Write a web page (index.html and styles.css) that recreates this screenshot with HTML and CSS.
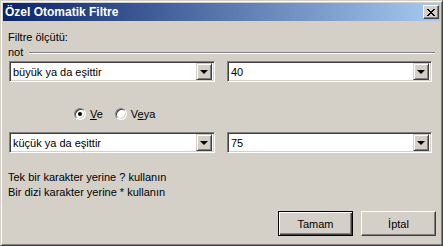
FILE: index.html
```html
<!DOCTYPE html>
<html lang="tr">
<head>
  <meta charset="UTF-8">
  <title>Özel Otomatik Filtre</title>
  <link rel="stylesheet" href="styles.css">
</head>
<body>

  <div class="window">
    <div class="titlebar">
      <span class="title">Özel Otomatik Filtre</span>
      <button class="close" type="button">
        <svg width="8" height="7" viewBox="0 0 8 7">
          <path d="M0 0h2v1h-2zM6 0h2v1h-2zM1 1h2v1h-2zM5 1h2v1h-2zM2 2h4v1h-4zM3 3h2v1h-2zM2 4h4v1h-4zM1 5h2v1h-2zM5 5h2v1h-2zM0 6h2v1h-2zM6 6h2v1h-2z" fill="#000"/>
        </svg>
      </button>
    </div>

    <div class="content">
      <div class="line">Filtre ölçütü:</div>
      <div class="group">
        <span>not</span>
        <span class="etched"></span>
      </div>

      <div class="row">
        <div class="combo wide">
          <span class="value">büyük ya da eşittir</span>
          <span class="drop"><i></i></span>
        </div>
        <div class="combo">
          <span class="value">40</span>
          <span class="drop"><i></i></span>
        </div>
      </div>

      <div class="radios">
        <label class="option"><span class="radio checked"></span><span><u>V</u>e</span></label>
        <label class="option"><span class="radio"></span><span>V<u>e</u>ya</span></label>
      </div>

      <div class="row second">
        <div class="combo wide">
          <span class="value">küçük ya da eşittir</span>
          <span class="drop"><i></i></span>
        </div>
        <div class="combo">
          <span class="value">75</span>
          <span class="drop"><i></i></span>
        </div>
      </div>

      <div class="hints">
        <div class="line">Tek bir karakter yerine ? kullanın</div>
        <div class="line">Bir dizi karakter yerine * kullanın</div>
      </div>

      <div class="buttons">
        <button class="btn default" type="button">Tamam</button>
        <button class="btn" type="button">İptal</button>
      </div>
    </div>
  </div>

</body>
</html>
```

FILE: styles.css
```css
body {
  margin: 0;
  font-family: "Liberation Sans", Arial, sans-serif;
  font-size: 11px;
  color: #000;
  background: #d4d0c8;
}
.window {
  width: 443px;
  height: 246px;
  box-sizing: border-box;
  background: #d4d0c8;
  border: 1px solid;
  border-color: #d4d0c8 #404040 #404040 #d4d0c8;
  box-shadow: inset 1px 1px 0 #fff, inset -1px -1px 0 #808080;
  padding: 2px;
}
.titlebar {
  height: 18px;
  display: flex;
  align-items: center;
  justify-content: space-between;
  padding: 0 1px 0 2px;
  background: linear-gradient(to right, #0a246a, #a6caf0);
}
.title {
  color: #fff;
  font-weight: bold;
  font-size: 12px;
}
.close {
  width: 16px;
  height: 14px;
  padding: 0;
  display: flex;
  align-items: center;
  justify-content: center;
  background: #d4d0c8;
  border: 1px solid;
  border-color: #fff #404040 #404040 #fff;
  box-shadow: inset -1px -1px 0 #808080;
}
.content {
  padding: 9px 8px 0 5px;
}
.line {
  height: 15px;
  line-height: 15px;
}
.group {
  display: flex;
  align-items: center;
  height: 15px;
  line-height: 15px;
  margin-right: -3px;
}
.etched {
  flex: 1;
  height: 0;
  margin-left: 6px;
  margin-top: 1px;
  border-top: 1px solid #808080;
  border-bottom: 1px solid #fff;
}
.row {
  display: flex;
  gap: 12px;
  margin: 1px 0 0 1px;
}
.row.second {
  margin-top: 11px;
}
.combo {
  flex: 1;
  height: 21px;
  box-sizing: border-box;
  display: flex;
  align-items: center;
  background: #fff;
  border: 1px solid;
  border-color: #808080 #fff #fff #808080;
  box-shadow: inset 1px 1px 0 #404040, inset -1px -1px 0 #d4d0c8;
  padding: 1px 2px 1px 2px;
}
.combo.wide {
  flex: 0 0 206px;
}
.value {
  flex: 1;
  padding-left: 1px;
}
.drop {
  width: 16px;
  height: 17px;
  box-sizing: border-box;
  display: flex;
  align-items: center;
  justify-content: center;
  background: #d4d0c8;
  border: 1px solid;
  border-color: #d4d0c8 #404040 #404040 #d4d0c8;
  box-shadow: inset 1px 1px 0 #fff, inset -1px -1px 0 #808080;
}
.drop i {
  width: 0;
  height: 0;
  border-left: 4px solid transparent;
  border-right: 4px solid transparent;
  border-top: 4px solid #000;
}
.radios {
  display: flex;
  gap: 12px;
  margin: 24px 0 0 66px;
  height: 15px;
}
.option {
  display: flex;
  align-items: center;
  gap: 4px;
}
.radio {
  width: 12px;
  height: 12px;
  box-sizing: border-box;
  border-radius: 50%;
  background: #fff;
  border: 1px solid;
  border-color: #808080 #fff #fff #808080;
  box-shadow: inset 1px 1px 0 #404040, inset -1px -1px 0 #d4d0c8;
  display: flex;
  align-items: center;
  justify-content: center;
}
.radio.checked::after {
  content: "";
  width: 4px;
  height: 4px;
  border-radius: 50%;
  background: #000;
}
.hints {
  margin-top: 17px;
}
.buttons {
  display: flex;
  justify-content: flex-end;
  gap: 8px;
  margin: 11px -4px 0 0;
}
.btn {
  width: 75px;
  height: 25px;
  padding: 0;
  font-family: "Liberation Sans", Arial, sans-serif;
  font-size: 11px;
  color: #000;
  background: #d4d0c8;
  border: 1px solid;
  border-color: #fff #404040 #404040 #fff;
  box-shadow: inset -1px -1px 0 #808080;
}
.btn.default {
  border-color: #000;
  box-shadow: inset 1px 1px 0 #fff, inset -1px -1px 0 #404040, inset -2px -2px 0 #808080;
}
```
